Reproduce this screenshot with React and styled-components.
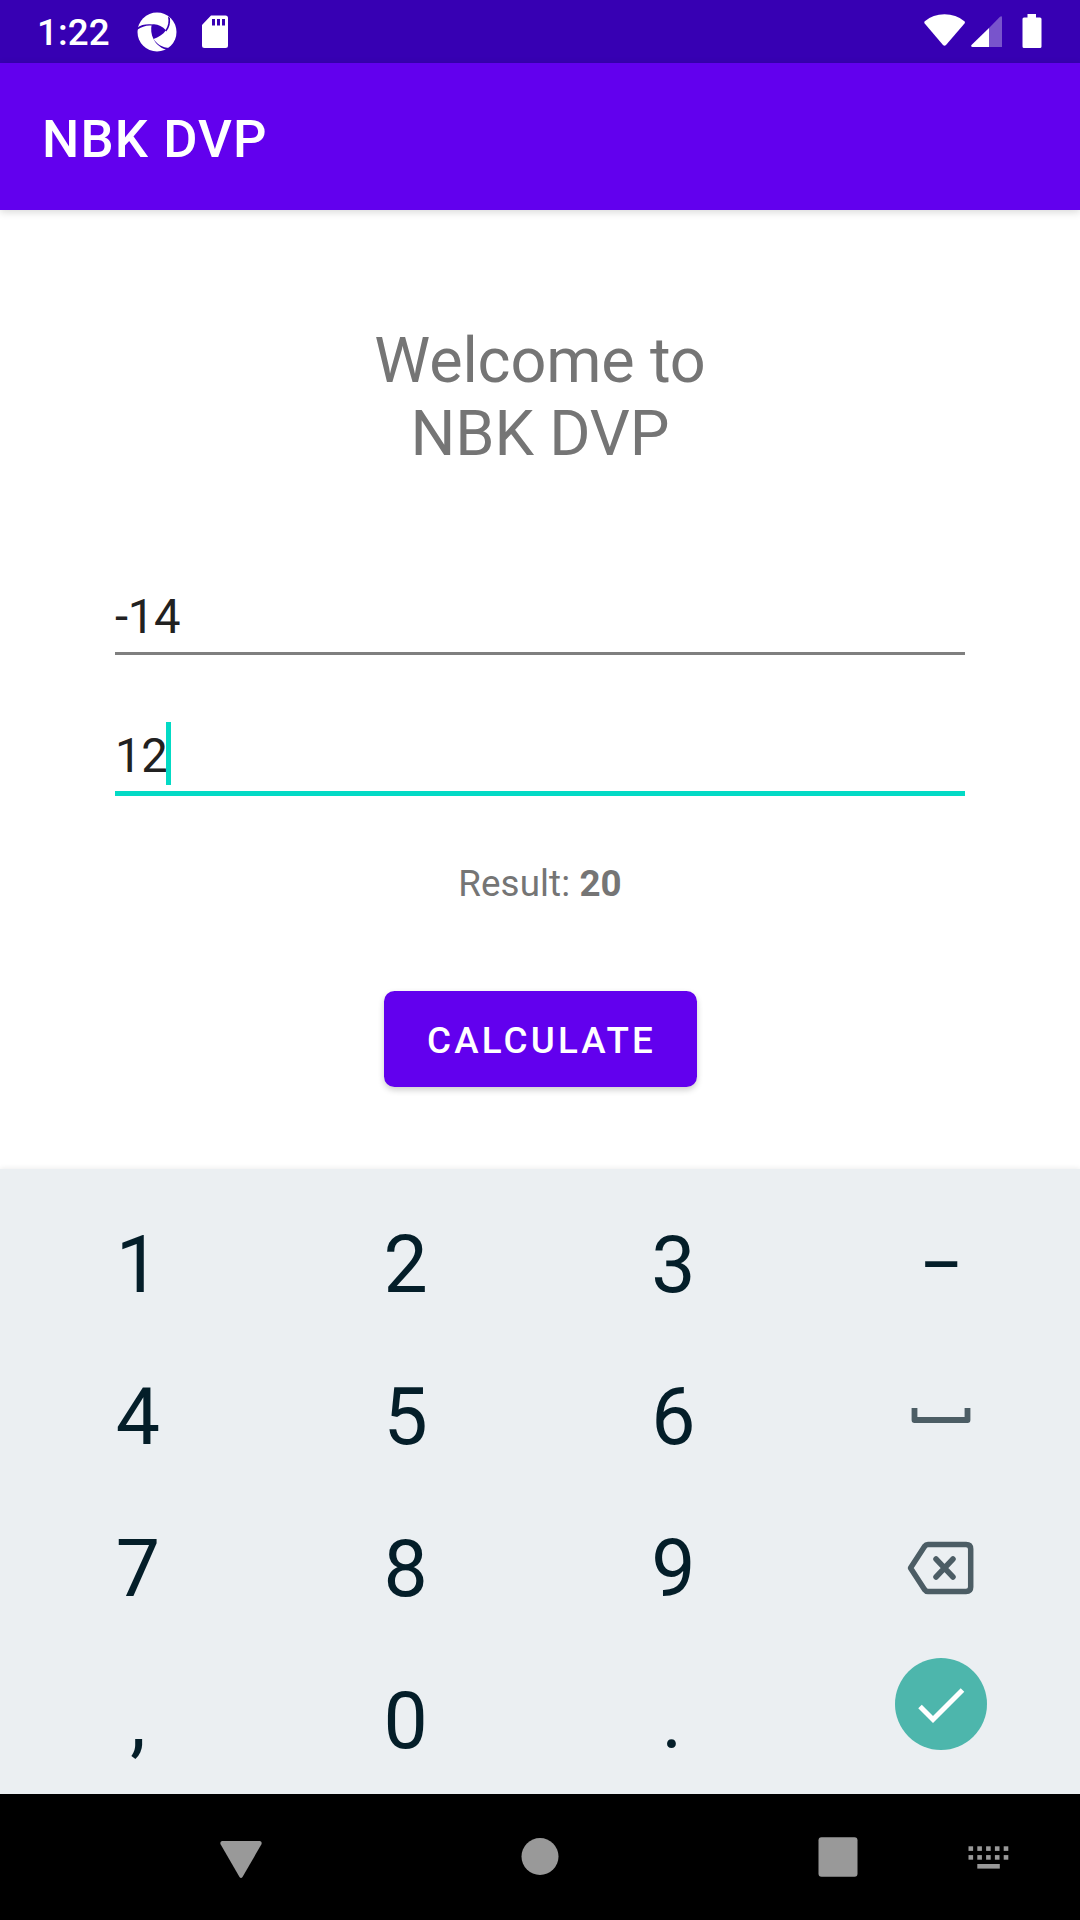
import React from "react";
import styled, { createGlobalStyle } from "styled-components";

const GlobalStyle = createGlobalStyle`
  * { box-sizing: border-box; }
  body { margin: 0; background: #fff; font-family: Roboto, sans-serif; }
  svg { display: block; flex: none; }
`;

const Screen = styled.div`
  width: 1080px;
  height: 1920px;
  display: flex;
  flex-direction: column;
  overflow: hidden;
  background: #fff;
`;

const StatusBar = styled.header`
  height: 63px;
  flex: none;
  display: flex;
  align-items: center;
  justify-content: space-between;
  padding: 0 38px 0 37px;
  background: #3700b3;
  color: #fff;
`;

const StatusGroup = styled.div`
  display: flex;
  align-items: center;
`;

const Clock = styled.span`
  width: 100px;
  padding-top: 2px;
  font-size: 36.75px;
  font-weight: 500;
  line-height: 43px;
  letter-spacing: 0.1px;
  white-space: nowrap;
`;

const AppBar = styled.div`
  height: 147px;
  flex: none;
  display: flex;
  align-items: center;
  padding: 5px 42px 0;
  background: #6200ee;
  box-shadow: 0 2px 8px rgba(0, 0, 0, 0.16);
  z-index: 1;
`;

const Title = styled.h1`
  margin: 0;
  color: #fff;
  font-size: 52.5px;
  font-weight: 500;
  line-height: 62px;
  letter-spacing: 1.15px;
`;

const Content = styled.main`
  height: 959px;
  flex: none;
  display: flex;
  flex-direction: column;
  align-items: center;
  padding-top: 114px;
`;

const Welcome = styled.h2`
  margin: 0;
  color: #757575;
  font-size: 63px;
  font-weight: 400;
  line-height: 73px;
  letter-spacing: -0.15px;
  text-align: center;
`;

const Field = styled.div`
  width: 850px;
  height: ${(p) => (p.$active ? 74 : 65)}px;
  margin-top: ${(p) => (p.$active ? 67 : 120)}px;
  display: flex;
  align-items: flex-start;
  border-bottom: ${(p) => (p.$active ? "5px solid #03dac5" : "3px solid #7f7f7f")};
  color: #212121;
  font-size: 47.25px;
  line-height: 55px;
  letter-spacing: -0.3px;
`;

const FieldText = styled.span`
  padding-top: ${(p) => (p.$active ? 7 : 0)}px;
`;

const Caret = styled.span`
  width: 5px;
  height: 63px;
  margin-left: -1.5px;
  background: #03dac5;
`;

const Result = styled.p`
  margin: 66px 0 0;
  color: #757575;
  font-size: 36.75px;
  line-height: 43px;
  letter-spacing: 0.1px;
`;

const CalculateButton = styled.button`
  width: 313px;
  height: 96px;
  margin: 86px 0 0 1px;
  padding: 2px 0 0 2px;
  border: 0;
  border-radius: 10.5px;
  background: #6200ee;
  color: #fff;
  font: 500 36.75px/43px Roboto, sans-serif;
  letter-spacing: 3.15px;
  box-shadow: 0 3px 6px rgba(0, 0, 0, 0.2);
`;

const Keyboard = styled.section`
  height: 625px;
  flex: none;
  display: grid;
  grid-template-columns: repeat(4, 1fr);
  grid-template-rows: repeat(4, 152px);
  padding: 19px 5px 0 4px;
  background: #ebeff2;
  box-shadow: 0 -1px 5px rgba(0, 0, 0, 0.07);
`;

const Key = styled.div`
  display: flex;
  align-items: center;
  justify-content: center;
  padding: ${(p) => (p.$glyph ? 2 : 0)}px ${(p) => p.$inset || 0}px 0 0;
  color: #041e29;
  font-size: 78.75px;
  line-height: 92px;
`;

const DoneKey = styled(Key)`
  align-items: flex-start;
  padding-top: 14px;
`;

const DoneCircle = styled.div`
  width: 92px;
  height: 92px;
  border-radius: 50%;
  background: #4db6ac;
`;

const NavBar = styled.nav`
  height: 126px;
  flex: none;
  display: flex;
  align-items: center;
  padding-left: 220px;
  background: #000;
`;

const ShutterIcon = () => (
  <svg width="40" height="40" viewBox="0 0 40 40">
    <circle cx="20" cy="20" r="19.5" fill="#fff" />
    <path d="M14.700 12.500C20 11.500 25 14 29 18.300C26 22.500 21.500 25.500 16.500 27C14 22.500 13.700 17 14.700 12.500Z" fill="#3700b3" />
    <path d="M0 16C4 12.800 9 12 15 12.500V13.500C9 13 5 14.500 0 18ZM28.300 18.500C31.500 14 32 9.500 31 4.500L33 6C33.500 11 32.500 15.500 29.300 19.500ZM16 26.500C19.500 31.500 25 36 33 36L31 38C25 37 19.500 33 16 26.500Z" fill="#3700b3" />
  </svg>
);

const SdCardIcon = () => (
  <svg width="28" height="34" viewBox="0 0 28 34">
    <path fillRule="evenodd" fill="#fff" d="M10 0.500H24.500Q27 0.500 27 3V30.500Q27 33 24.500 33H3.500Q1 33 1 30.500V10Z M11 4V10.500H14V4ZM16 4V10.500H19V4ZM21 4V10.500H24V4Z" />
  </svg>
);

const WifiIcon = () => (
  <svg width="42" height="35" viewBox="0 0 42 35">
    <path d="M0.800 7.200Q9 0.300 20.500 0.300T40.400 7.200Q41.400 8.200 40.500 9.400L22 31Q20.500 32.500 19 31L0.700 9.400Q-0.200 8.200 0.800 7.200Z" fill="#fff" />
  </svg>
);

const SignalIcon = () => (
  <svg width="32" height="33" viewBox="0 0 32 33">
    <path d="M18 13L29 1.800Q31 0.500 31 2.500V32H18Z" fill="#fff" opacity="0.33" />
    <path d="M18 13V32H1.500Q-0.500 31.500 0.500 30Z" fill="#fff" />
  </svg>
);

const BatteryIcon = () => (
  <svg width="20" height="35" viewBox="0 0 20 35">
    <path d="M5.500 0H14V3.500H18Q19.500 3.500 19.500 5V32.500Q19.500 34 18 34H2Q0.500 34 0.500 32.500V5Q0.500 3.500 2 3.500H5.500Z" fill="#fff" />
  </svg>
);

const SpaceIcon = () => (
  <svg width="60" height="18" viewBox="0 0 60 18">
    <path d="M3.500 1V13H56.500V1" fill="none" stroke="#4c5d65" strokeWidth="5.800" strokeLinejoin="round" />
  </svg>
);

const BackspaceIcon = () => (
  <svg width="68" height="54" viewBox="0 0 68 54">
    <g fill="none" stroke="#4c5d65" strokeWidth="5.500" strokeLinejoin="round">
      <path d="M21 3.500H59Q63.700 3.500 63.700 8V46Q63.700 50.500 59 50.500H21Q19 50.500 17.500 48.500L3.500 27L17.500 5.500Q19 3.500 21 3.500Z" />
      <path d="M29 18L46 36M46 18L29 36" strokeLinecap="round" />
    </g>
  </svg>
);

const CheckIcon = () => (
  <svg width="92" height="92" viewBox="0 0 92 92">
    <path d="M25 48.500L38 61.500L67.500 32" fill="none" stroke="#fff" strokeWidth="5" />
  </svg>
);

const BackIcon = () => (
  <svg width="42" height="44" viewBox="0 0 42 44">
    <path d="M2 6H40Q42.500 7 41.300 9.500L22.500 42Q21 44 19.500 42L0.700 9.500Q-0.500 7 2 6Z" fill="#999" />
  </svg>
);

const HomeIcon = () => (
  <svg width="38" height="38" viewBox="0 0 38 38"><circle cx="19" cy="18.500" r="18.500" fill="#999" /></svg>
);

const RecentsIcon = () => (
  <svg width="40" height="40" viewBox="0 0 40 40"><rect x="0.500" y="0.300" width="39" height="39.500" rx="3" fill="#999" /></svg>
);

const KeyboardIcon = () => (
  <svg width="41" height="24" viewBox="0 0 41 24">
    {[1, 9.8].map((y) => [0.5, 9.3, 18.1, 26.9, 35.7].map((x) => (
      <rect key={`${x}-${y}`} x={x} y={y + 0.3} width="4.600" height="4.600" fill="#999" />
    )))}
    <rect x="9.300" y="19" width="22.500" height="4.600" fill="#999" />
  </svg>
);

const Spacer = styled.span`
  flex: none;
  width: ${(p) => p.$w}px;
`;

const keys = ["1", "2", "3", "−", "4", "5", "6", <SpaceIcon key="s" />, "7", "8", "9", <BackspaceIcon key="b" />, ",", "0", "."];

export default function App() {
  return (
    <Screen>
      <GlobalStyle />
      <StatusBar>
        <StatusGroup>
          <Clock>1:22</Clock>
          <ShutterIcon />
          <Spacer $w={24} />
          <SdCardIcon />
        </StatusGroup>
        <StatusGroup>
          <WifiIcon />
          <Spacer $w={5} />
          <SignalIcon />
          <Spacer $w={19} />
          <BatteryIcon />
        </StatusGroup>
      </StatusBar>
      <AppBar>
        <Title>NBK DVP</Title>
      </AppBar>
      <Content>
        <Welcome>Welcome to<br />NBK DVP</Welcome>
        <Field><FieldText>-14</FieldText></Field>
        <Field $active><FieldText $active>12</FieldText><Caret /></Field>
        <Result>Result: <b>20</b></Result>
        <CalculateButton>CALCULATE</CalculateButton>
      </Content>
      <Keyboard>
        {keys.map((k, i) => (
          <Key key={i} $glyph={typeof k === "string"} $inset={k === "." ? 3 : 0}>{k}</Key>
        ))}
        <DoneKey><DoneCircle><CheckIcon /></DoneCircle></DoneKey>
      </Keyboard>
      <NavBar>
        <BackIcon />
        <Spacer $w={258.5} />
        <HomeIcon />
        <Spacer $w={259.5} />
        <RecentsIcon />
        <Spacer $w={110} />
        <KeyboardIcon />
      </NavBar>
    </Screen>
  );
}
